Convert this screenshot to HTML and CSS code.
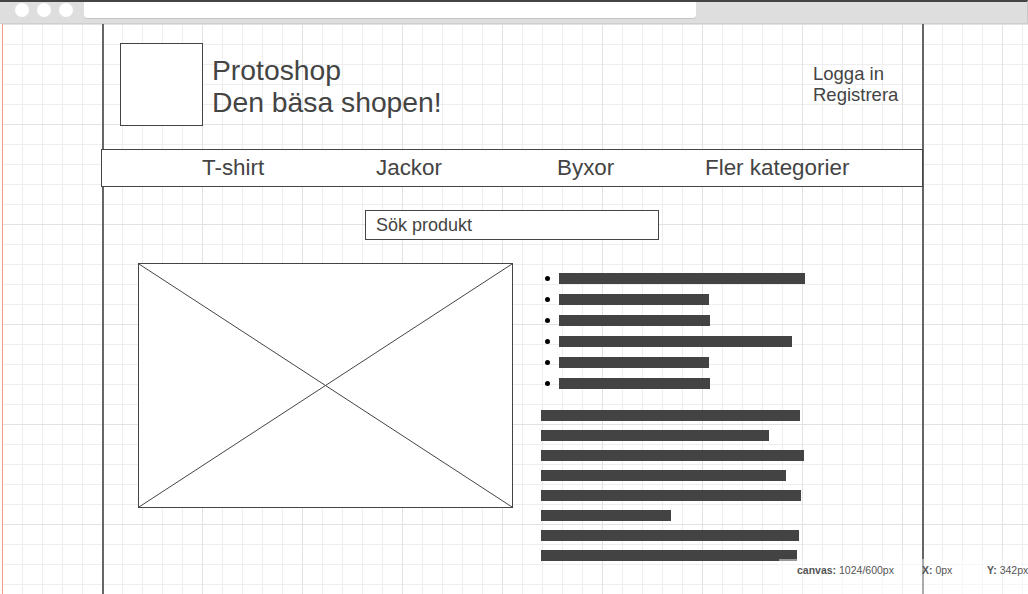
FILE: index.html
```html
<!DOCTYPE html>
<html>
<head>
    <title>Protoshop - wireframe</title>
    <link rel="stylesheet" href="styles.css">
</head>
<body>
    <div class="chrome">
        <span class="dot"></span>
        <span class="dot"></span>
        <span class="dot"></span>
        <div class="address"></div>
    </div>

    <div class="canvas">
        <div class="page">
            <div class="header">
                <div class="logo"></div>
                <div class="title">
                    <div>Protoshop</div>
                    <div>Den bäsa shopen!</div>
                </div>
                <div class="account">
                    <div>Logga in</div>
                    <div>Registrera</div>
                </div>
            </div>

            <div class="nav">
                <span>T-shirt</span>
                <span>Jackor</span>
                <span>Byxor</span>
                <span>Fler kategorier</span>
            </div>

            <div class="search">Sök produkt</div>

            <div class="main">
                <div class="picture">
                    <svg viewBox="0 0 100 100" preserveAspectRatio="none">
                        <line x1="0" y1="0" x2="100" y2="100" vector-effect="non-scaling-stroke"/>
                        <line x1="100" y1="0" x2="0" y2="100" vector-effect="non-scaling-stroke"/>
                    </svg>
                </div>
                <div class="details">
                    <ul class="facts">
                        <li><span class="bar" style="width: 246px"></span></li>
                        <li><span class="bar" style="width: 150px"></span></li>
                        <li><span class="bar" style="width: 151px"></span></li>
                        <li><span class="bar" style="width: 233px"></span></li>
                        <li><span class="bar" style="width: 150px"></span></li>
                        <li><span class="bar" style="width: 151px"></span></li>
                    </ul>
                    <div class="text">
                        <span class="bar" style="width: 259px"></span>
                        <span class="bar" style="width: 228px"></span>
                        <span class="bar" style="width: 263px"></span>
                        <span class="bar" style="width: 245px"></span>
                        <span class="bar" style="width: 260px"></span>
                        <span class="bar" style="width: 130px"></span>
                        <span class="bar" style="width: 258px"></span>
                        <span class="bar" style="width: 256px"></span>
                    </div>
                </div>
            </div>
        </div>

        <div class="status">
            <span class="cell wide"><b>canvas:</b> 1024/600px</span>
            <span class="cell"><b>X:</b> 0px</span>
            <span class="cell"><b>Y:</b> 342px</span>
        </div>
    </div>
</body>
</html>
```

FILE: styles.css
```css
body { margin: 0; width: 1028px; height: 594px; overflow: hidden; font-family: "Liberation Sans", Arial, sans-serif; color: #444; }

/* browser chrome */
.chrome { position: relative; height: 21px; background: #dedede; border-top: 2px solid #444; border-bottom: 1px solid #cfcfcf; border-right: 1px solid #c8c8c8; display: flex; align-items: flex-start; padding-left: 15px; gap: 8px; }
.dot { width: 14px; height: 14px; margin-top: 1px; border-radius: 50%; background: #fff; }
.address { margin-left: 3px; width: 612px; height: 16px; background: #fff; border-radius: 0 0 3px 3px; box-shadow: 0 1px 0 #c4c4c4; }

/* drawing canvas with grid */
.canvas {
    position: relative; height: 570px; margin-left: 2px; border-left: 1px solid #f09a8a;
    background-color: #fff;
    background-image:
        linear-gradient(to right, #e2e2e2 1px, transparent 1px),
        linear-gradient(to bottom, #e2e2e2 1px, transparent 1px),
        linear-gradient(to right, #eeeeee 1px, transparent 1px),
        linear-gradient(to bottom, #eeeeee 1px, transparent 1px);
    background-size: 100px 100px, 100px 100px, 20px 20px, 20px 20px;
    background-position: 99px 0, 0 0, 19px 0, 0 0;
}

.page { box-sizing: border-box; width: 822px; height: 570px; margin-left: 99px; border-left: 2px solid #666; border-right: 2px solid #666; }

.header { display: flex; align-items: flex-start; height: 106px; padding: 19px 0 0 16px; }
.logo { box-sizing: border-box; width: 83px; height: 83px; border: 1px solid #444; background: #fff; }
.title { margin: 11px 0 0 9px; font-size: 28.3px; line-height: 32px; }
.account { margin: 20px 0 0 auto; width: 109px; font-size: 18.5px; line-height: 21px; }

.nav { display: grid; grid-template-columns: 174px 181px 148px auto; height: 36px; margin: 0 -1px 0 -3px; padding-left: 100px; border: 1px solid #444; background: #fff; font-size: 22.4px; line-height: 36px; }

.search { box-sizing: border-box; width: 294px; height: 30px; margin: 23px 0 0 261px; padding-left: 10px; border: 1px solid #444; background: #fff; font-size: 18px; line-height: 28px; }

.main { display: flex; align-items: flex-start; margin-top: 23px; padding-left: 34px; }
.picture { box-sizing: border-box; width: 375px; height: 245px; border: 1px solid #444; background: #fff; }
.picture svg { display: block; width: 100%; height: 100%; stroke: #444; stroke-width: 1; }
.details { margin-left: 28px; }

.bar { display: block; height: 11px; background: #434343; }
.facts { list-style: none; margin: 5px 0 0; padding: 0; }
.facts li { display: flex; align-items: center; height: 21px; }
.facts li::before { content: ""; width: 5px; height: 5px; margin: 0 9px 0 4px; border-radius: 50%; background: #000; }
.text { margin-top: 16px; }
.text .bar { margin-bottom: 9px; }

/* editor status strip */
.status { position: absolute; left: 776px; top: 535px; right: 0; bottom: 0; display: flex; padding: 5px 0 0 18px; background: rgba(255, 255, 255, 0.45); font-size: 10.5px; color: #555; white-space: nowrap; overflow: hidden; }
.cell { flex: none; width: 65px; }
.cell.wide { width: 125px; }
```
